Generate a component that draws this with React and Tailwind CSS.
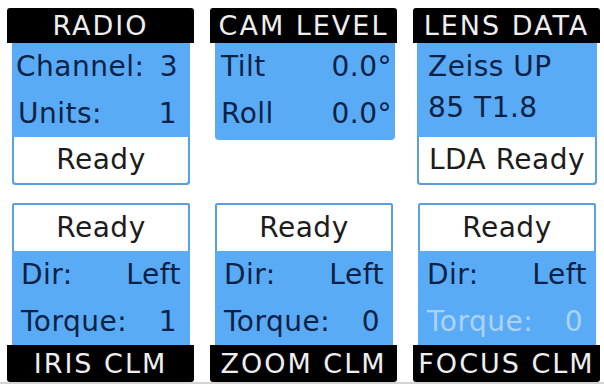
import React from "react";

const font = { fontFamily: '"DejaVu Sans", "Liberation Sans", sans-serif' };

const Header = ({ children }) => (
  <div className="h-[35px] bg-black text-[#eeeeee] text-center text-[27px] leading-[35px] tracking-[2px] rounded-t-[3px] whitespace-nowrap">
    {children}
  </div>
);

const Footer = ({ children }) => (
  <div className="h-[37px] bg-black text-[#eeeeee] text-center text-[27px] leading-[37px] tracking-[2px] rounded-b-[3px] whitespace-nowrap">
    {children}
  </div>
);

const Row = ({ label, value, className = "", faded }) => (
  <div
    className={`h-[47px] flex items-center justify-between text-[28px] tracking-[0.5px] ${
      faded ? "text-[#acd3f7]" : "text-[#0a2146]"
    } ${className}`}
  >
    <span>{label}</span>
    <span>{value}</span>
  </div>
);

const StatusBox = ({ children, className = "" }) => (
  <div
    className={`h-[48px] bg-white border-2 border-[#5a9fe0] flex items-center justify-center text-[28px] tracking-[0.5px] text-[#1c1c1c] ${className}`}
  >
    {children}
  </div>
);

const ClmPanel = ({ torque, title, fadedTorque }) => (
  <div className="flex flex-col">
    <div className="ml-[5px] mr-[4px] bg-[#5aabf5] rounded-t-[3px]">
      <StatusBox className="rounded-t-[3px] border-b-0">Ready</StatusBox>
      <Row label="Dir:" value="Left" className="pl-[9px] pr-[9px]" />
      <Row
        label="Torque:"
        value={torque}
        className="pl-[9px] pr-[13px]"
        faded={fadedTorque}
      />
    </div>
    <Footer>{title}</Footer>
  </div>
);

export default function App() {
  return (
    <div className="w-[604px] h-[384px] bg-white overflow-hidden pt-[8px] pl-[7px] border-b-2 border-[#d4d4d4]" style={font}>
      <div className="grid grid-cols-[187px_187px_187px] gap-x-[16px]">
        {/* Radio */}
        <div className="flex flex-col">
          <Header>RADIO</Header>
          <div className="ml-[5px] mr-[4px] bg-[#5aabf5] rounded-b-[4px]">
            <Row label="Channel:" value="3" className="pl-[4px] pr-[12px]" />
            <Row label="Units:" value="1" className="pl-[6px] pr-[13px]" />
            <StatusBox className="rounded-b-[4px] border-t-0">Ready</StatusBox>
          </div>
        </div>

        {/* Cam level */}
        <div className="flex flex-col">
          <Header>CAM LEVEL</Header>
          <div className="ml-[5px] mr-[2px] bg-[#5aabf5] rounded-b-[4px] pb-[3px]">
            <Row label="Tilt" value="0.0°" className="pl-[6px] pr-[3px]" />
            <Row label="Roll" value="0.0°" className="pl-[6px] pr-[3px]" />
          </div>
        </div>

        {/* Lens data */}
        <div className="flex flex-col">
          <Header>LENS DATA</Header>
          <div className="ml-[4px] mr-[3px] bg-[#5aabf5] rounded-b-[4px]">
            <div className="h-[94px] pt-[3px] pl-[11px] text-[28px] leading-[41px] tracking-[0.5px] text-[#0a2146]">
              <div>Zeiss UP</div>
              <div>85 T1.8</div>
            </div>
            <StatusBox className="rounded-b-[4px] border-t-0">LDA Ready</StatusBox>
          </div>
        </div>
      </div>

      <div className="grid grid-cols-[187px_187px_187px] gap-x-[16px] mt-[18px]">
        <ClmPanel torque="1" title="IRIS CLM" />
        <ClmPanel torque="0" title="ZOOM CLM" />
        <ClmPanel torque="0" title="FOCUS CLM" fadedTorque />
      </div>
    </div>
  );
}
